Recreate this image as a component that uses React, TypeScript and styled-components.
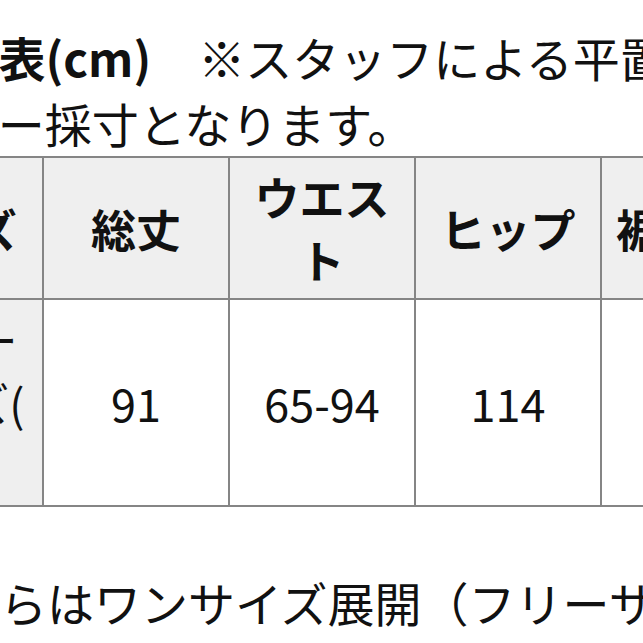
import React from "react";
import styled, { createGlobalStyle } from "styled-components";

const GlobalStyle = createGlobalStyle`
  html, body {
    margin: 0;
    padding: 0;
    background: #fff;
  }
  body {
    font-family: "Noto Sans CJK JP", "Noto Sans", sans-serif;
    color: #111;
  }
`;

const Page = styled.div`
  width: 643px;
  height: 643px;
  overflow: hidden;
  background: #fff;
`;

const Content = styled.div`
  width: 1400px;
  margin-left: -141px;
  padding-top: 24px;
`;

const Note = styled.p<{ $gap?: number }>`
  margin: ${(p) => p.$gap ?? 0}px 0 0;
  font-size: 47px;
  line-height: 66px;
  white-space: nowrap;
`;

const Strong = styled.span`
  font-weight: 700;
`;

const SizeTable = styled.table<{ $w: number }>`
  width: ${(p) => p.$w}px;
  margin-left: -3px;
  border-collapse: collapse;
  table-layout: fixed;
  font-size: 45px;
  line-height: 63px;
`;

const HeadCell = styled.th`
  padding: 7px 10px;
  border: 2px solid #858585;
  background: #efefef;
  font-weight: 700;
  text-align: center;
  vertical-align: middle;
`;

const RowHead = styled.th`
  padding: 8px 10px;
  border: 2px solid #858585;
  background: #efefef;
  font-weight: 400;
  text-align: center;
  vertical-align: middle;
`;

const DataCell = styled.td`
  padding: 8px 10px;
  border: 2px solid #858585;
  background: #fff;
  text-align: center;
  vertical-align: middle;
`;

const columns = [
  { label: "サイズ", w: 186 },
  { label: "総丈", w: 186 },
  { label: "ウエスト", w: 186 },
  { label: "ヒップ", w: 186 },
  { label: "裾まわり", w: 210 },
];

const values = ["91", "65-94", "114", "48"];

const tableWidth = columns.reduce((sum, c) => sum + c.w, 0);

export default function App() {
  return (
    <>
      <GlobalStyle />
      <Page>
        <Content>
          <Note>
            <Strong>サイズ表(cm)</Strong>　※スタッフによる平置きメジャー
          </Note>
          <Note>メジャー採寸となります。</Note>
          <SizeTable $w={tableWidth}>
            <colgroup>
              {columns.map((c) => (
                <col key={c.label} style={{ width: c.w }} />
              ))}
            </colgroup>
            <thead>
              <tr>
                {columns.map((c) => (
                  <HeadCell key={c.label}>{c.label}</HeadCell>
                ))}
              </tr>
            </thead>
            <tbody>
              <tr>
                <RowHead>
                  フリー
                  <br />
                  サイズ(
                  <br />
                  F)
                </RowHead>
                {values.map((v) => (
                  <DataCell key={v}>{v}</DataCell>
                ))}
              </tr>
            </tbody>
          </SizeTable>
          <Note $gap={62}>※こちらはワンサイズ展開（フリーサイズ）となります。</Note>
        </Content>
      </Page>
    </>
  );
}
